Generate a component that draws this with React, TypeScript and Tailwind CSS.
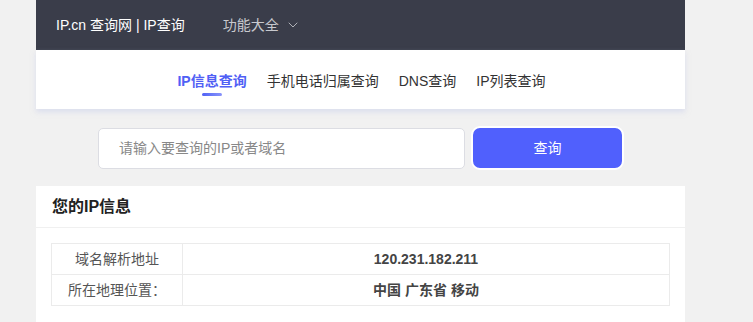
import { ChevronDown } from 'lucide-react'

const TABS = ['IP信息查询', '手机电话归属查询', 'DNS查询', 'IP列表查询']

const ROWS: [string, string][] = [
  ['域名解析地址', '120.231.182.211'],
  ['所在地理位置：', '中国 广东省 移动'],
]

export default function App() {
  return (
    <div
      className="min-h-[322px] bg-[#f1f1f1] text-[#333]"
      style={{ fontFamily: '"Liberation Sans", "Noto Sans CJK SC", sans-serif' }}
    >
      <div className="mx-[36px] w-[649px]">
        <header className="flex h-[50px] items-center bg-[#3a3d4a] pl-[20px] text-[14px]">
          <span className="text-white">IP.cn 查询网 | IP查询</span>
          <span className="ml-[38px] flex items-center gap-[6px] text-[#c8c9ce]">
            功能大全
            <ChevronDown size={16} strokeWidth={1.25} />
          </span>
        </header>

        <nav className="flex h-[59px] justify-center gap-[20px] bg-white pl-[2px] pt-[21px] text-[14px] shadow-[0_3px_5px_rgba(200,205,235,0.5)]">
          {TABS.map((t, i) => (
            <div key={t} className="flex flex-col items-center">
              <span className={i === 0 ? 'font-bold text-[#5060f5]' : 'text-[#333]'}>{t}</span>
              {i === 0 && (
                <span className="mt-[1px] h-[3px] w-[20px] rounded-full bg-gradient-to-r from-[#5060f5] to-[#8a94fa]" />
              )}
            </div>
          ))}
        </nav>

        <div className="mt-[17px] flex items-center pl-[62px]">
          <div className="flex h-[41px] w-[367px] items-center rounded-[5px] border border-[#dcdde3] bg-white pl-[20px] text-[14px] text-[#888]">
            请输入要查询的IP或者域名
          </div>
          <button className="ml-[6px] flex h-[44px] w-[153px] items-center justify-center rounded-[9px] border-2 border-white bg-[#5060fd] text-[14px] text-white">
            查询
          </button>
        </div>

        <section className="mt-[16px] bg-white pb-[16px]">
          <h2 className="flex h-[42px] items-center border-b border-[#f0f0f0] pl-[16px] text-[16px] font-bold text-[#222]">
            您的IP信息
          </h2>
          <div className="px-[15px] pt-[15px]">
            <table className="w-full border-collapse text-[14px]">
              <tbody>
                {ROWS.map(([k, v]) => (
                  <tr key={k} className="h-[31px]">
                    <td className="w-[131px] border border-[#ebebeb] text-center text-[#555]">{k}</td>
                    <td className="border border-[#ebebeb] text-center font-bold text-[#444]">{v}</td>
                  </tr>
                ))}
              </tbody>
            </table>
          </div>
        </section>
      </div>
    </div>
  )
}
